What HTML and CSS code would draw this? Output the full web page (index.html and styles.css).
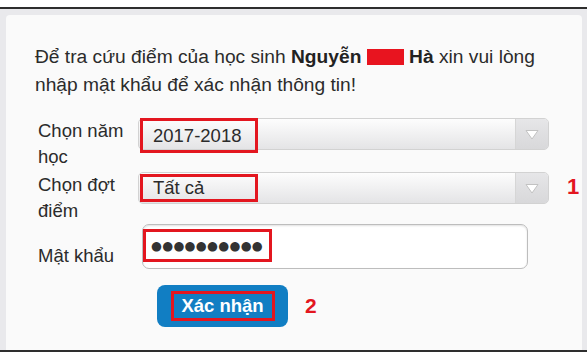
FILE: index.html
```html
<!DOCTYPE html>
<html lang="vi">
<head>
<meta charset="utf-8">
<link rel="stylesheet" href="styles.css">
</head>
<body>
<div class="frame">
  <div class="card">
    <p class="intro">Để tra cứu điểm của học sinh <b>Nguyễn</b> <span class="redact"></span> <b>Hà</b> xin vui lòng<br>nhập mật khẩu để xác nhận thông tin!</p>
    <div class="form">
      <div class="label">Chọn năm học</div>
      <div class="select">
        <span class="val val-a">2017-2018</span>
        <span class="arrow"><svg width="14" height="11" viewBox="0 0 14 11"><path d="M1 1.5 L13 1.5 L7 10 Z" fill="#fff" stroke="#c2c2c2" stroke-width="1"/></svg></span>
      </div>
      <div class="mark"></div>

      <div class="label">Chọn đợt điểm</div>
      <div class="select">
        <span class="val val-b">Tất cả</span>
        <span class="arrow"><svg width="14" height="11" viewBox="0 0 14 11"><path d="M1 1.5 L13 1.5 L7 10 Z" fill="#fff" stroke="#c2c2c2" stroke-width="1"/></svg></span>
      </div>
      <div class="mark"><span class="num">1</span></div>

      <div class="label label-pw">Mật khẩu</div>
      <div class="input"><span class="pw">●●●●●●●●●●</span></div>
      <div class="mark"></div>

      <div class="label"></div>
      <div class="actions">
        <button class="btn"><span class="btn-text">Xác nhận</span></button>
        <span class="num num-2">2</span>
      </div>
    </div>
  </div>
</div>
</body>
</html>
```

FILE: styles.css
```css
html, body {
  margin: 0;
  padding: 0;
  background: #ffffff;
}

body {
  font-family: "Liberation Sans", Arial, sans-serif;
  color: #2b2b2b;
}

.frame {
  margin-top: 7px;
  height: 335px;
  border-top: 2px solid #2e2e2e;
  border-bottom: 2px solid #2e2e2e;
  background: #e9e9ec;
  padding: 6px 5px 0 6px;
  box-sizing: content-box;
  overflow: hidden;
}

.card {
  background: #fafafa;
  border-radius: 4px 4px 0 0;
  height: 340px;
  padding: 28px 20px 0 29px;
  box-sizing: border-box;
}

.intro {
  margin: 0;
  font-size: 19.2px;
  line-height: 28px;
  color: #2b2b2b;
}

.intro b {
  color: #222;
}

.redact {
  display: inline-block;
  width: 37px;
  height: 16px;
  background: #e8141f;
  vertical-align: -2px;
}

.form {
  display: grid;
  grid-template-columns: 100px 411px 1fr;
  row-gap: 2px;
  margin-top: 19px;
  margin-left: 3px;
  font-size: 18.5px;
  line-height: 26px;
}

.label {
  color: #2b2b2b;
  padding-right: 6px;
}

.label-pw {
  padding-top: 17px;
}

.select {
  display: flex;
  height: 32px;
  box-sizing: border-box;
  border: 1px solid #d2d2d2;
  border-radius: 5px;
  background: linear-gradient(#fdfdfd, #e4e4e6);
  font-size: 18.5px;
}

.val {
  box-sizing: border-box;
  width: 118px;
  margin-left: 1px;
  border: 3px solid #e3161f;
  padding-left: 10px;
  display: flex;
  align-items: center;
  color: #2b2b2b;
}

.val-a {
  height: 35px;
  margin-top: -1px;
}

.val-b {
  height: 28px;
  margin-top: 1px;
}

.arrow {
  margin-left: auto;
  width: 32px;
  border-left: 1px solid #d6d6d6;
  border-radius: 0 4px 4px 0;
  background: linear-gradient(#e6e6e8, #d8d8da);
  display: flex;
  align-items: center;
  justify-content: center;
}

.mark {
  display: flex;
  align-items: flex-start;
}

.num {
  color: #e3161f;
  font-weight: bold;
  font-size: 22px;
  line-height: 30px;
  padding-left: 18px;
}

.input {
  margin-top: -2px;
  margin-left: 4px;
  width: 386px;
  height: 45px;
  box-sizing: border-box;
  border: 1px solid #bdbdbd;
  border-radius: 7px;
  background: #ffffff;
  box-shadow: inset 0 1px 2px rgba(0, 0, 0, 0.12);
  padding: 4px 0 0 0;
}

.pw {
  display: inline-flex;
  align-items: center;
  box-sizing: border-box;
  height: 33px;
  width: 129px;
  border: 3px solid #e3161f;
  padding-left: 5px;
  font-family: "DejaVu Sans", sans-serif;
  font-size: 12.5px;
  letter-spacing: 0.3px;
  color: #333;
}

.actions {
  display: flex;
  align-items: center;
  margin-top: 14px;
  padding-left: 19px;
}

.btn {
  width: 131px;
  height: 42px;
  border: none;
  border-radius: 8px;
  background: #117ec3;
  padding: 0;
  display: flex;
  align-items: center;
  justify-content: center;
  cursor: pointer;
}

.btn-text {
  box-sizing: border-box;
  width: 104px;
  height: 30px;
  border: 3px solid #e3161f;
  display: flex;
  align-items: center;
  justify-content: center;
  color: #ffffff;
  font-family: "Liberation Sans", Arial, sans-serif;
  font-weight: bold;
  font-size: 18.5px;
}

.num-2 {
  padding-left: 17px;
  font-size: 21px;
}
```
